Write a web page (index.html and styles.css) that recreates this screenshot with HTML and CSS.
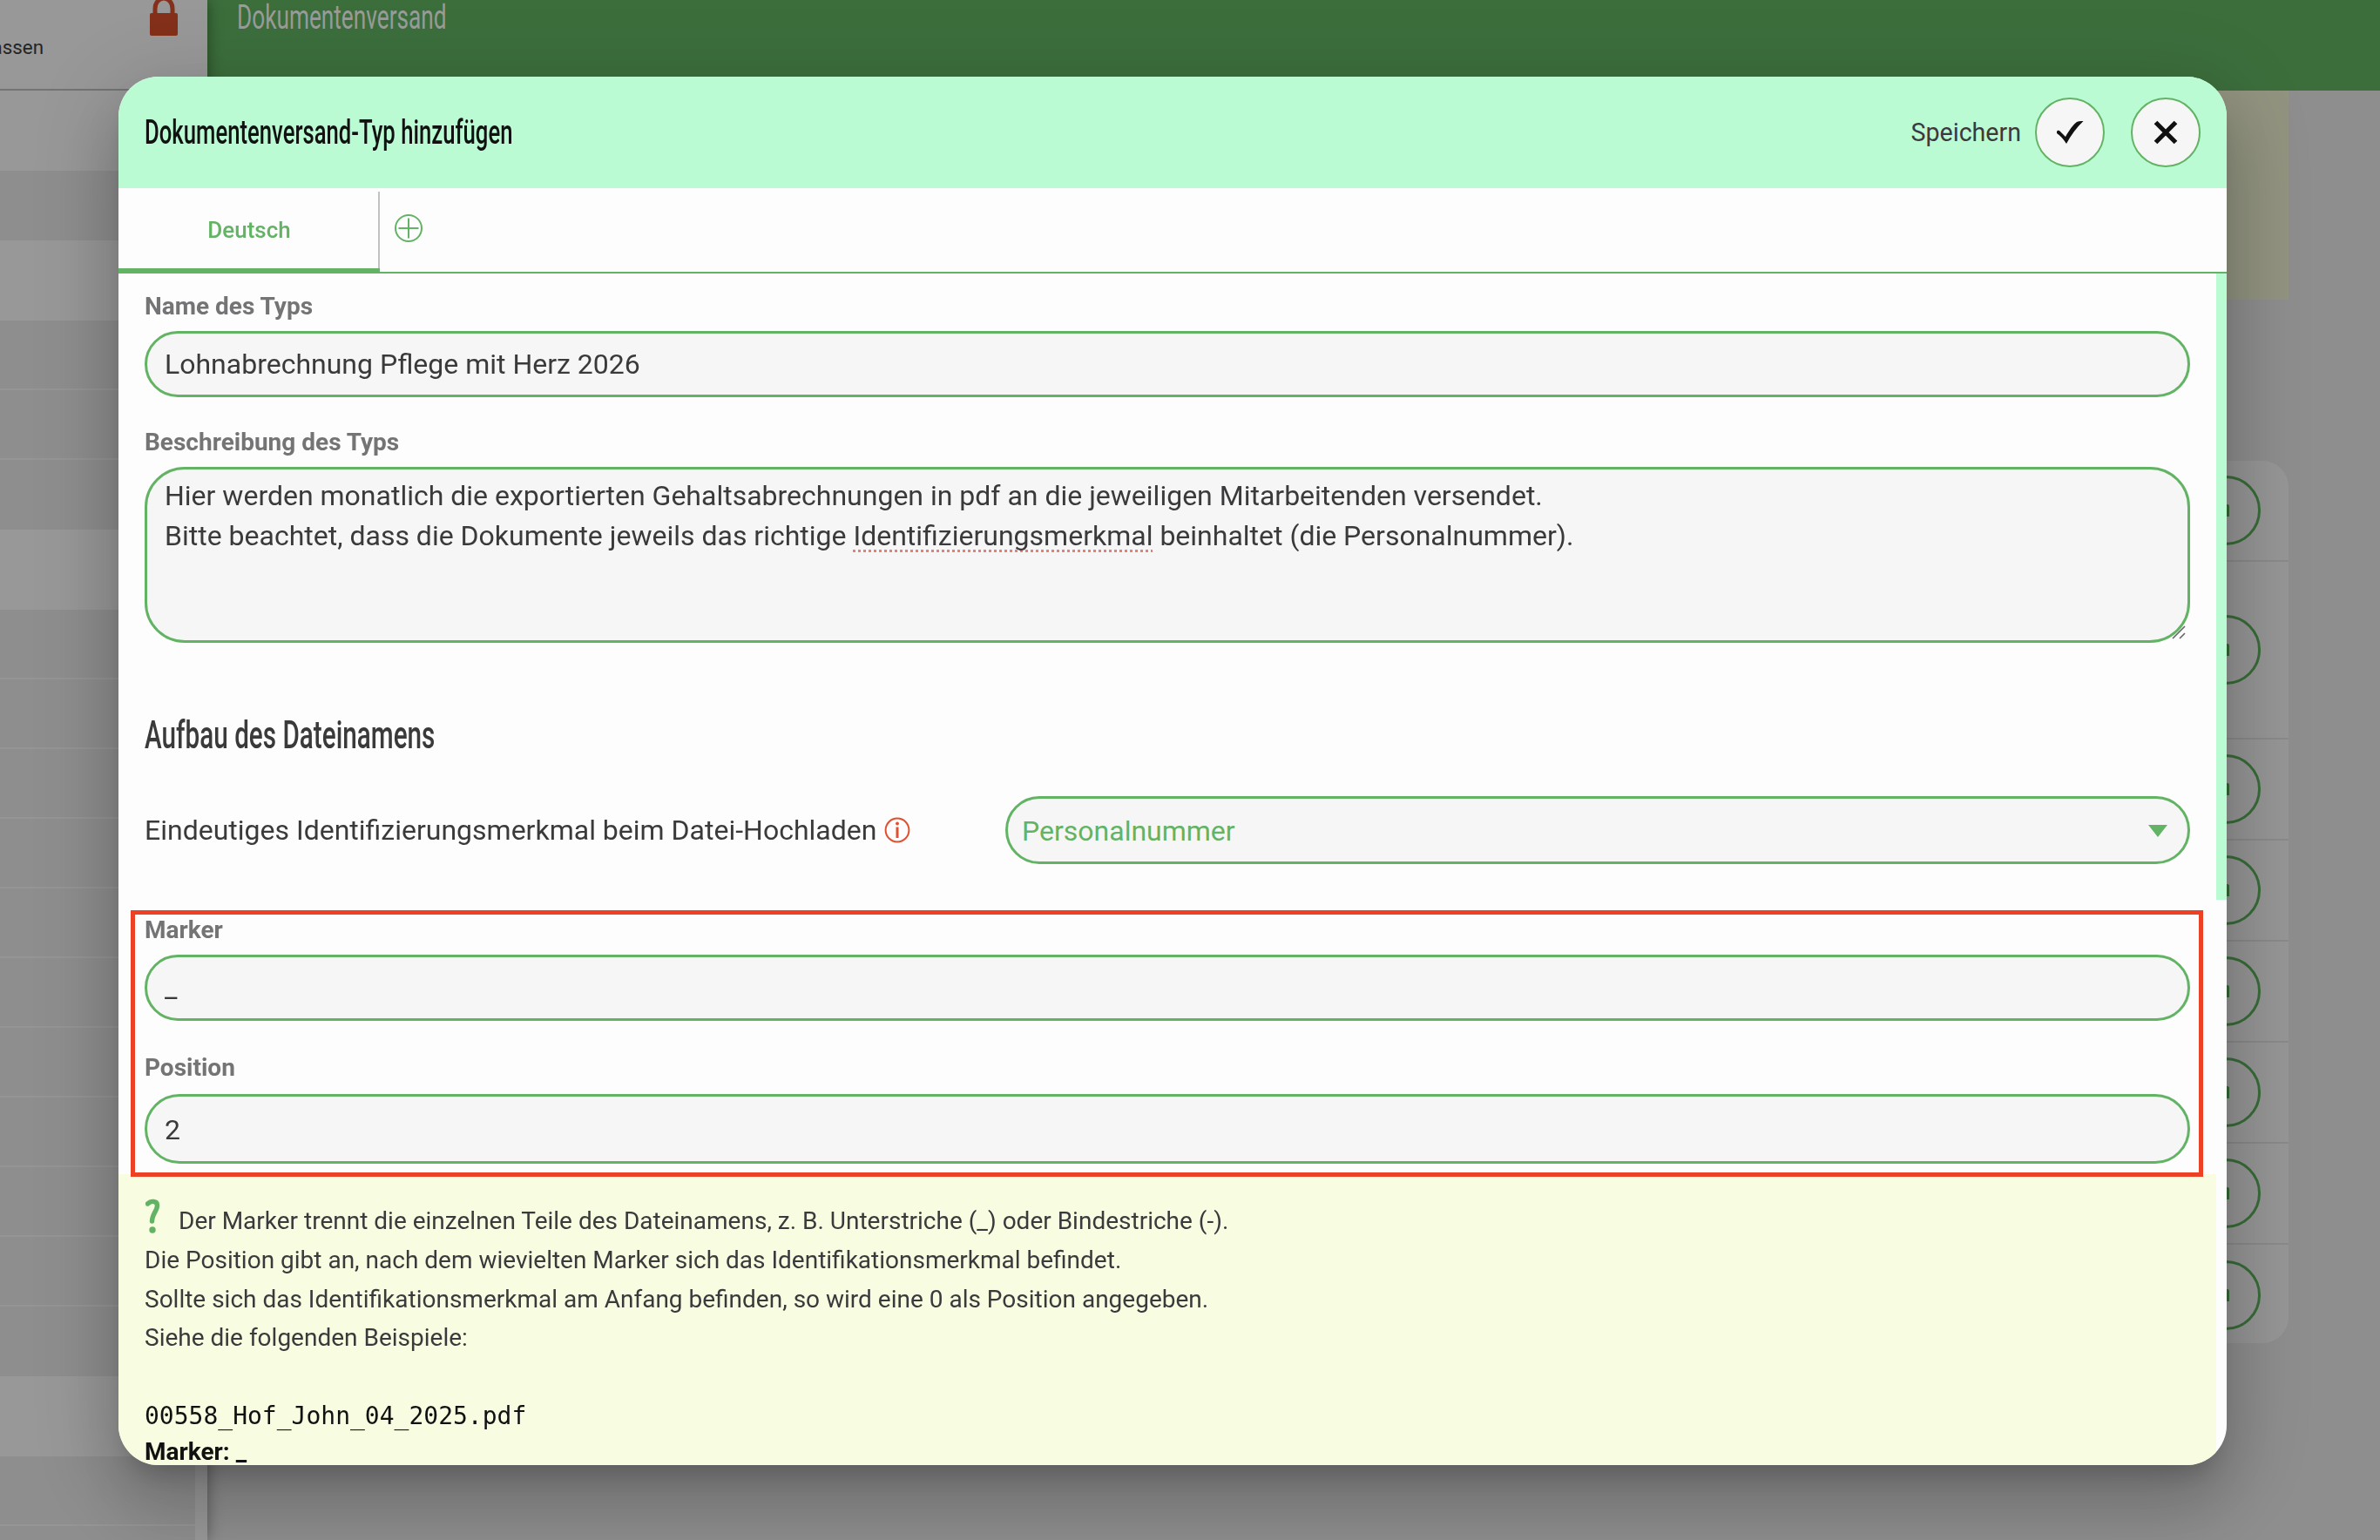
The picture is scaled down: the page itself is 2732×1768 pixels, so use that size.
FILE: index.html
```html
<!DOCTYPE html>
<html lang="de">
<head>
<meta charset="utf-8">
<title>Dokumentenversand</title>
<link rel="stylesheet" href="styles.css">
</head>
<body>
<div class="app">
  <aside class="sidebar">
    <div class="side-head">
      <span class="side-text">assen</span>
      <svg class="lock" viewBox="0 0 34 46"><path d="M7 22V14a10 12 0 0 1 20 0V22" fill="none" stroke="#84301b" stroke-width="5"/><rect x="1" y="19" width="32" height="26" rx="2" fill="#84301b"/></svg>
    </div>
    <nav class="side-list">
      <div class="group light g-first"></div>
      <div class="group"><div class="item"></div></div>
      <div class="group light"></div>
      <div class="group"><div class="item"></div><div class="item"></div><div class="item"></div></div>
      <div class="group light"></div>
      <div class="group"><div class="item"></div><div class="item"></div><div class="item"></div><div class="item"></div><div class="item"></div><div class="item"></div><div class="item"></div><div class="item"></div><div class="item"></div><div class="item"></div><div class="item"></div></div>
      <div class="group light"></div>
      <div class="group"><div class="item"></div><div class="item"></div></div>
    </nav>
  </aside>
  <main class="main">
    <header class="topbar"><span class="narrow topbar-title">Dokumentenversand</span></header>
    <div class="notice"></div>
    <div class="table">
      <div class="row"><span class="round"><i></i></span></div>
      <div class="row tall"><span class="round"><i></i></span></div>
      <div class="row"><span class="round"><i></i></span></div>
      <div class="row"><span class="round"><i></i></span></div>
      <div class="row"><span class="round"><i></i></span></div>
      <div class="row"><span class="round"><i></i></span></div>
      <div class="row"><span class="round"><i></i></span></div>
      <div class="row"><span class="round"><i></i></span></div>
    </div>
  </main>
</div>

<section class="dialog">
  <header class="dialog-head">
    <h1 class="narrow dialog-title">Dokumentenversand-Typ hinzufügen</h1>
    <div class="actions">
      <span class="save">Speichern</span>
      <button class="circle"><svg width="32" height="28" viewBox="0 0 32 28"><path d="M1 13.500C1 11.500 3.500 11 5 13L11 19C15 12 20 4.500 24 2Q26.500 .6 31.500 1Q20 12 12 27Q7 19 1 15Z" fill="#111"/></svg></button>
      <button class="circle"><svg width="28" height="28" viewBox="0 0 28 28"><path d="M2.500 2.500L25.500 25.500M25.500 2.500L2.500 25.500" stroke="#111" stroke-width="5.200"/></svg></button>
    </div>
  </header>
  <div class="tabs">
    <div class="tab">Deutsch</div>
    <div class="tab-add"><svg width="34" height="34" viewBox="0 0 34 34" fill="none" stroke="#63b365" stroke-width="2"><circle cx="17" cy="17" r="15"/><path d="M17 5.500V28.500M5.500 17H28.500"/></svg></div>
  </div>
  <div class="scroll">
    <div class="form">
      <div class="fields">
        <label class="label l-name">Name des Typs</label>
        <div class="input">Lohnabrechnung Pflege mit Herz 2026</div>
        <label class="label l-desc">Beschreibung des Typs</label>
        <div class="textarea">Hier werden monatlich die exportierten Gehaltsabrechnungen in pdf an die jeweiligen Mitarbeitenden versendet.<br>Bitte beachtet, dass die Dokumente jeweils das richtige <span class="misspelled">Identifizierungsmerkmal</span> beinhaltet (die Personalnummer).
          <svg class="grip" width="18" height="18" viewBox="0 0 18 18" stroke="#666" stroke-width="1.600"><path d="M2 16L16 2M10 16L16 10"/></svg>
        </div>
        <h2 class="narrow section-title">Aufbau des Dateinamens</h2>
        <div class="select-row">
          <div class="question">Eindeutiges Identifizierungsmerkmal beim Datei-Hochladen
            <svg width="30" height="30" viewBox="0 0 30 30"><circle cx="15" cy="15" r="13.400" fill="none" stroke="#e0502f" stroke-width="2"/><circle cx="15" cy="7.500" r="1.900" fill="#e0502f"/><path d="M15 11.500V24" stroke="#e0502f" stroke-width="3"/></svg>
          </div>
          <div class="select">Personalnummer<svg width="22" height="14" viewBox="0 0 22 14"><path d="M0 0H22L11 14Z" fill="#63b365"/></svg></div>
        </div>
        <div class="marked">
          <label class="label l-marker">Marker</label>
          <div class="input">_</div>
          <label class="label l-pos">Position</label>
          <div class="input number">2</div>
          <div class="frame"></div>
        </div>
      </div>
      <div class="help">
        <p><svg class="qm" width="18" height="40" viewBox="0 0 18 40"><path d="M2.500 6C6 2.500 13.500 2 13.500 8C13.500 14 7.500 18 7.500 26" fill="none" stroke="#63b365" stroke-width="5.400" stroke-linecap="round"/><circle cx="8" cy="36" r="3.700" fill="#63b365"/></svg>Der Marker trennt die einzelnen Teile des Dateinamens, z. B. Unterstriche (_) oder Bindestriche (-).</p>
        <p>Die Position gibt an, nach dem wievielten Marker sich das Identifikationsmerkmal befindet.</p>
        <p>Sollte sich das Identifikationsmerkmal am Anfang befinden, so wird eine 0 als Position angegeben.</p>
        <p>Siehe die folgenden Beispiele:</p>
        <p>&nbsp;</p>
        <p class="file">00558_Hof_John_04_2025.pdf</p>
        <p class="strong">Marker: _</p>
      </div>
    </div>
    <div class="scrollbar"><div class="thumb"></div></div>
  </div>
</section>
</body>
</html>
```
FILE: styles.css
```css
* { box-sizing: border-box; }
body { margin: 0; width: 2732px; height: 1768px; overflow: hidden; background: #8e8e8e; font-family: Roboto, sans-serif; font-size: 32px; color: #3a3a3c; }
h1, h2, p { margin: 0; font-weight: 400; }
svg { flex: none; }

.app { display: flex; height: 1768px; }
.sidebar { flex: none; width: 238px; height: 100%; background: #989898; box-shadow: 0 0 16px rgba(0,0,0,.4); position: relative; z-index: 1; }
.side-head { display: flex; height: 104px; border-bottom: 2px solid #737373; justify-content: flex-end; padding-right: 33px; overflow: hidden; }
.side-text { margin: 40px 121px 0 0; font-size: 22.400px; line-height: 29px; color: #252525; }
.lock { width: 34px; height: 46px; margin-top: -4px; }
.side-list { width: 224px; }
.group { background: #8e8e8e; }
.group.light { height: 92px; background: #989898; }
.item { height: 80px; border-bottom: 2px solid #959595; }
.item:last-child { border-bottom: 0; }

.main { flex: 1; }
.topbar { height: 104px; background: #3c6e3c; padding-left: 34px; }
.narrow { display: block; width: max-content; transform-origin: 0 50%; white-space: nowrap; }
.topbar-title { font-size: 38px; line-height: 41px; color: #999c99; transform: scaleX(.69); font-weight: 400; }
.notice { margin-right: 105px; height: 240px; background: #929480; }
.table { margin: 185px 105px 0 60px; height: 1013px; border-radius: 30px; background: #969696; }
.row { height: 116px; border-bottom: 2px solid #8a8a8a; padding: 0 32px 0 0; display: flex; align-items: center; justify-content: flex-end; }
.row.tall { height: 204px; }
.row:last-child { border: 0; }
.round { width: 80px; height: 80px; border: 3px solid #386c38; border-radius: 50%; display: flex; align-items: center; justify-content: center; }
.round i { width: 8px; height: 14px; border: 3px solid #386c38; border-bottom: 0; border-radius: 3px 3px 0 0; }

.dialog { position: fixed; z-index: 2; left: 136px; top: 88px; width: 2420px; height: 1594px; border-radius: 46px; overflow: hidden; background: #fdfdfd; display: flex; flex-direction: column; box-shadow: 0 22px 30px -14px rgba(0,0,0,.2), 0 48px 76px 6px rgba(0,0,0,.14), 0 18px 92px 16px rgba(0,0,0,.12); }
.dialog-head { flex: none; height: 128px; background: #bbfbd3; display: flex; align-items: center; justify-content: space-between; padding: 0 30px; }
.dialog-title { font-size: 38px; line-height: 44px; font-weight: 500; color: #111; transform: scaleX(.676); }
.actions { display: flex; align-items: center; gap: 30px; }
.save { font-size: 28.600px; margin-right: -14px; }
.circle { width: 80px; height: 80px; padding: 0; border: 2px solid #63b365; border-radius: 50%; background: #f6f6f6; display: flex; align-items: center; justify-content: center; }

.tabs { flex: none; height: 98px; display: flex; border-bottom: 2px solid #63b365; }
.tab { width: 300px; height: 98px; line-height: 97px; text-align: center; font-size: 26px; font-weight: 500; color: #63b365; border-bottom: 6px solid #63b365; background: linear-gradient(#c2c2c2, #c2c2c2) 298px 4px / 2px 100% no-repeat; }
.tab-add { padding: 29px 0 0 16px; }

.scroll { flex: 1; display: flex; min-height: 0; }
.form { width: 2408px; }
.scrollbar { width: 12px; }
.thumb { height: 719px; background: #bbfbd3; }
.fields { padding: 0 30px; height: 1034px; }
.label { display: block; font-size: 28px; line-height: 36px; font-weight: 700; color: #747476; }
.l-name { height: 66px; padding-top: 20px; }
.l-desc { height: 80px; padding-top: 34px; }
.l-marker { height: 104px; padding-top: 58px; }
.l-pos { height: 84px; padding-top: 36px; }
.input { height: 76px; border: 3px solid #63b365; border-radius: 40px; background: #f6f6f6; padding: 0 20px; line-height: 71px; }
.input.number { height: 80px; line-height: 76px; }
.textarea { position: relative; height: 202px; border: 3px solid #63b365; border-radius: 46px; background: #f6f6f6; padding: 7px 20px; line-height: 46px; }
.misspelled { text-decoration: underline dotted #f27c72 3px; text-underline-offset: 5px; text-decoration-skip-ink: none; }
.grip { position: absolute; right: 1px; bottom: 0; }
.section-title { margin-top: 80px; font-size: 44px; line-height: 52px; font-weight: 500; transform: scaleX(.675); }
.select-row { margin-top: 44px; display: flex; align-items: center; justify-content: space-between; }
.question { display: flex; align-items: center; gap: 9px; }
.select { width: 1360px; height: 78px; border: 3px solid #63b365; border-radius: 40px; background: #f6f6f6; color: #63b365; padding: 2px 23px 0 16px; display: flex; align-items: center; justify-content: space-between; }
.marked { position: relative; }
.frame { position: absolute; left: -16px; top: 53px; width: 2379px; height: 306px; border: 5px solid #ed4125; }

.help { height: 334px; background: #f8fce0; padding: 32px 30px 0; font-size: 28px; line-height: 44.800px; overflow: hidden; }
.help p { white-space: nowrap; }
.qm { float: left; margin: -4px 20px 0 1px; }
.help .file { font-family: "DejaVu Sans Mono", monospace; color: #111; }
.help .strong { font-weight: 700; color: #111; margin-top: -4px; line-height: 44px; }
```
